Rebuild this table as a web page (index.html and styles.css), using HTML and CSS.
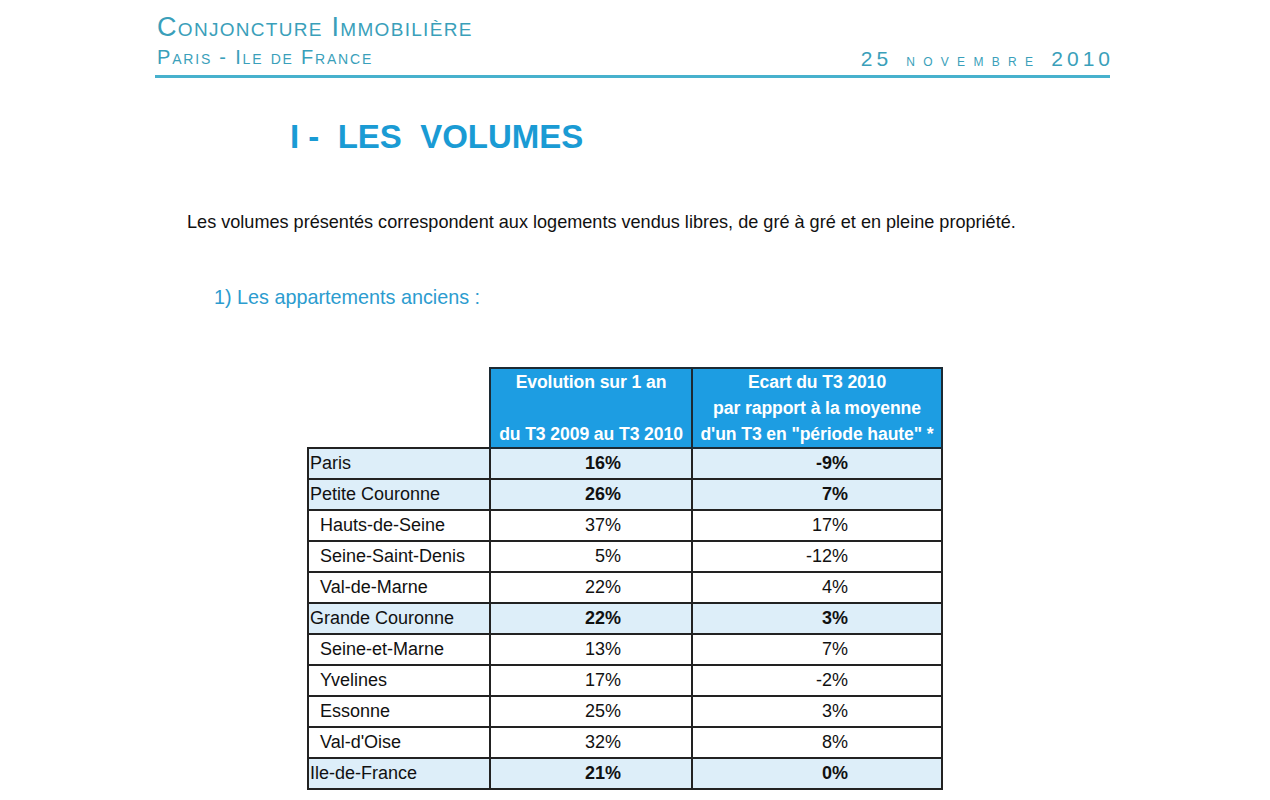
FILE: index.html
```html
<!DOCTYPE html>
<html lang="fr">
<head>
<meta charset="utf-8">
<title>Conjoncture Immobilière</title>
<link rel="stylesheet" href="styles.css">
</head>
<body>
<div class="page">
  <header class="masthead">
    <div class="mast-left">
      <div class="mast-title">Conjoncture Immobilière</div>
      <div class="mast-sub">Paris - Ile de France</div>
    </div>
    <div class="mast-date"><span class="num">25</span><span class="month">novembre</span><span class="num">2010</span></div>
  </header>

  <h1 class="section-title">I -&nbsp; LES&nbsp; VOLUMES</h1>

  <p class="intro">Les volumes présentés correspondent aux logements vendus libres, de gré à gré et en pleine propriété.</p>

  <h2 class="subhead">1) Les appartements anciens :</h2>

  <table class="data">
    <thead>
      <tr>
        <th class="blank"></th>
        <th class="col">Evolution sur 1 an<br>&nbsp;<br>du T3 2009 au T3 2010</th>
        <th class="col">Ecart du T3 2010<br>par rapport à la moyenne<br>d'un T3 en "période haute" *</th>
      </tr>
    </thead>
    <tbody>
      <tr class="hl"><td class="name">Paris</td><td class="v1">16%</td><td class="v2">-9%</td></tr>
      <tr class="hl"><td class="name">Petite Couronne</td><td class="v1">26%</td><td class="v2">7%</td></tr>
      <tr><td class="name sub">Hauts-de-Seine</td><td class="v1">37%</td><td class="v2">17%</td></tr>
      <tr><td class="name sub">Seine-Saint-Denis</td><td class="v1">5%</td><td class="v2">-12%</td></tr>
      <tr><td class="name sub">Val-de-Marne</td><td class="v1">22%</td><td class="v2">4%</td></tr>
      <tr class="hl"><td class="name">Grande Couronne</td><td class="v1">22%</td><td class="v2">3%</td></tr>
      <tr><td class="name sub">Seine-et-Marne</td><td class="v1">13%</td><td class="v2">7%</td></tr>
      <tr><td class="name sub">Yvelines</td><td class="v1">17%</td><td class="v2">-2%</td></tr>
      <tr><td class="name sub">Essonne</td><td class="v1">25%</td><td class="v2">3%</td></tr>
      <tr><td class="name sub">Val-d'Oise</td><td class="v1">32%</td><td class="v2">8%</td></tr>
      <tr class="hl"><td class="name">Ile-de-France</td><td class="v1">21%</td><td class="v2">0%</td></tr>
    </tbody>
  </table>
</div>
</body>
</html>
```

FILE: styles.css
```css
html, body {
  margin: 0;
  padding: 0;
  background: #ffffff;
}

body {
  font-family: "Liberation Sans", Arial, sans-serif;
  color: #111;
}

.page {
  width: 1270px;
  height: 800px;
  overflow: hidden;
}

.masthead {
  margin-left: 155px;
  width: 955px;
  padding-top: 11px;
  padding-bottom: 4px;
  border-bottom: 3px solid #47b1cd;
  display: flex;
  justify-content: space-between;
  align-items: flex-end;
}

.mast-left {
  padding-left: 2px;
}

.mast-title {
  font-variant: small-caps;
  font-size: 27px;
  line-height: 32px;
  letter-spacing: 1.3px;
  color: #3a9fba;
}

.mast-sub {
  font-variant: small-caps;
  font-size: 20px;
  line-height: 28px;
  letter-spacing: 1.8px;
  color: #3a9fba;
}

.mast-date {
  color: #3a9fba;
  display: flex;
  align-items: baseline;
  padding-bottom: 0;
  margin-right: -4px;
}

.mast-date .num {
  font-size: 21px;
  letter-spacing: 4px;
}

.mast-date .month {
  font-size: 12px;
  text-transform: uppercase;
  letter-spacing: 8.3px;
  margin: 0 10px 0 14px;
}

.section-title {
  margin: 39px 0 0 290px;
  font-size: 33px;
  line-height: 40px;
  font-weight: bold;
  color: #1a9bd4;
}

.intro {
  margin: 54px 0 0 187px;
  font-size: 18.1px;
  line-height: 22px;
  color: #111;
}

.subhead {
  margin: 52px 0 0 214px;
  font-size: 19.8px;
  line-height: 24px;
  font-weight: normal;
  color: #2c9ccf;
}

.data {
  margin: 58px 0 0 307px;
  border-collapse: collapse;
  font-size: 18px;
}

.data th.blank {
  width: 181px;
  border: none;
  background: transparent;
  padding: 0;
}

.data th.col {
  background: #1d9de2;
  color: #ffffff;
  font-weight: bold;
  font-size: 17.6px;
  line-height: 26px;
  text-align: center;
  vertical-align: top;
  border: 2px solid #1c2a33;
  padding: 0;
  height: 76px;
  white-space: nowrap;
  letter-spacing: -0.1px;
}

.data th.col:nth-child(2) {
  width: 200px;
}

.data th.col:nth-child(3) {
  width: 248px;
}

.data td {
  height: 29px;
  border: 2px solid #222;
  padding: 0;
  color: #111;
}

.data tr.hl td {
  background: #ddeef9;
  font-weight: bold;
}

.data tr.hl td.name {
  font-weight: normal;
}

.data td.name {
  padding-left: 1px;
}

.data td.name.sub {
  padding-left: 11px;
}

.data td.v1 {
  text-align: right;
  padding-right: 70px;
}

.data td.v2 {
  text-align: right;
  padding-right: 93px;
}
```
